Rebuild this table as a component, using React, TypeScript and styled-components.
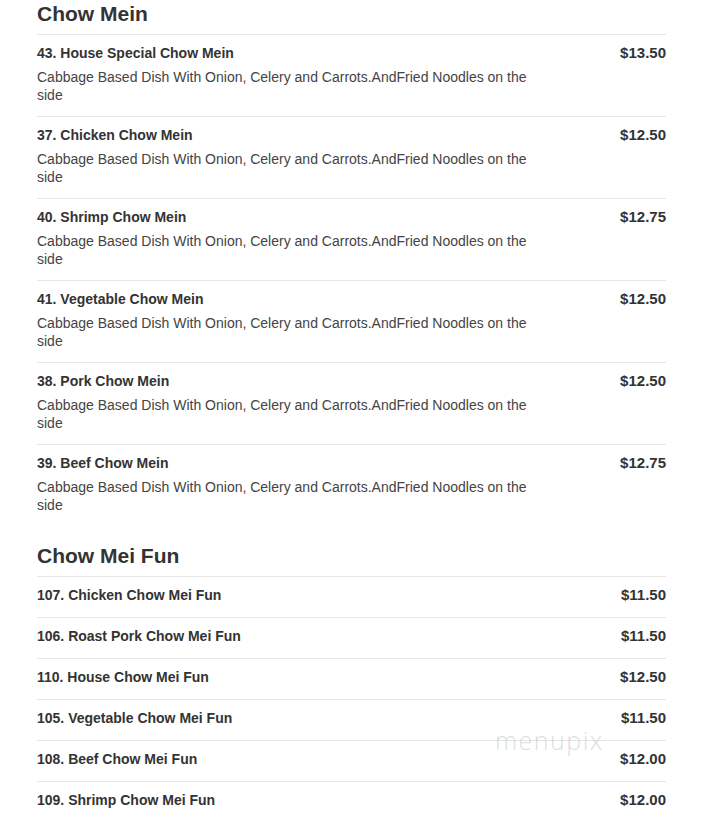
import React from 'react';
import styled, { createGlobalStyle } from 'styled-components';

const GlobalStyle = createGlobalStyle`
  html, body {
    margin: 0;
    padding: 0;
    background: #ffffff;
  }
  body {
    font-family: 'Liberation Sans', Arial, sans-serif;
    color: #333333;
  }
`;

interface MenuItem {
  name: string;
  price: string;
  description?: string;
}

interface MenuSection {
  title: string;
  items: MenuItem[];
}

const DESC =
  'Cabbage Based Dish With Onion, Celery and Carrots.AndFried Noodles on the side';

const sections: MenuSection[] = [
  {
    title: 'Chow Mein',
    items: [
      { name: '43. House Special Chow Mein', price: '$13.50', description: DESC },
      { name: '37. Chicken Chow Mein', price: '$12.50', description: DESC },
      { name: '40. Shrimp Chow Mein', price: '$12.75', description: DESC },
      { name: '41. Vegetable Chow Mein', price: '$12.50', description: DESC },
      { name: '38. Pork Chow Mein', price: '$12.50', description: DESC },
      { name: '39. Beef Chow Mein', price: '$12.75', description: DESC },
    ],
  },
  {
    title: 'Chow Mei Fun',
    items: [
      { name: '107. Chicken Chow Mei Fun', price: '$11.50' },
      { name: '106. Roast Pork Chow Mei Fun', price: '$11.50' },
      { name: '110. House Chow Mei Fun', price: '$12.50' },
      { name: '105. Vegetable Chow Mei Fun', price: '$11.50' },
      { name: '108. Beef Chow Mei Fun', price: '$12.00' },
      { name: '109. Shrimp Chow Mei Fun', price: '$12.00' },
    ],
  },
];

const Page = styled.div`
  position: relative;
  padding: 3px 62px 0 37px;
  width: 629px;
`;

const Section = styled.section`
  & + & {
    margin-top: 19px;
  }
`;

const SectionTitle = styled.h2`
  margin: 0 0 9px;
  font-size: 21px;
  line-height: 22px;
  font-weight: bold;
  color: #333333;
`;

const Row = styled.div<{ $hasDesc: boolean }>`
  display: flex;
  justify-content: space-between;
  align-items: flex-start;
  border-top: 1px solid #e6e6e6;
  padding: 9px 0 ${(p) => (p.$hasDesc ? '12px' : '13px')};
`;

const Info = styled.div`
  width: 500px;
`;

const ItemName = styled.div`
  font-size: 14px;
  line-height: 18px;
  font-weight: bold;
  color: #333333;
`;

const Description = styled.div`
  margin-top: 6px;
  font-size: 14px;
  line-height: 18px;
  color: #444444;
`;

const Price = styled.div`
  font-size: 15px;
  line-height: 18px;
  font-weight: bold;
  color: #333333;
`;

const Watermark = styled.div`
  position: absolute;
  left: 495px;
  top: 723px;
  font-family: 'Open Sans', sans-serif;
  font-weight: 300;
  font-size: 25px;
  letter-spacing: 1.5px;
  color: rgba(170, 170, 170, 0.4);
  pointer-events: none;
`;

export default function App(): JSX.Element {
  return (
    <>
      <GlobalStyle />
      <Page>
        {sections.map((section) => (
          <Section key={section.title}>
            <SectionTitle>{section.title}</SectionTitle>
            {section.items.map((item) => (
              <Row key={item.name} $hasDesc={!!item.description}>
                <Info>
                  <ItemName>{item.name}</ItemName>
                  {item.description && <Description>{item.description}</Description>}
                </Info>
                <Price>{item.price}</Price>
              </Row>
            ))}
          </Section>
        ))}
        <Watermark>menupix</Watermark>
      </Page>
    </>
  );
}
